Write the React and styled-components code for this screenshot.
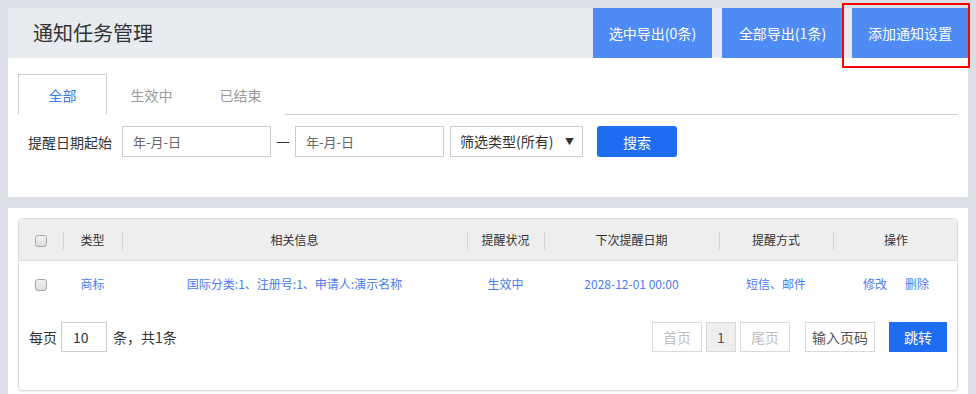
import React from "react";
import styled, { createGlobalStyle } from "styled-components";

const Global = createGlobalStyle`
  html, body { margin: 0; padding: 0; }
  body {
    background: #dcdfe5;
    font-family: "Microsoft YaHei", "Noto Sans CJK SC", "Noto Sans", sans-serif;
    color: #333;
  }
  * { box-sizing: border-box; }
`;

const Page = styled.div`
  padding: 8px 8px 0 8px;
  display: flex;
  flex-direction: column;
  gap: 11px;
  width: 976px;
  height: 394px;
  overflow: hidden;
`;

const Panel = styled.section`
  background: #fff;
`;

const Header = styled.header`
  height: 50px;
  background: #e8ebef;
  display: flex;
  align-items: stretch;
`;

const Title = styled.h1`
  margin: 0;
  padding-left: 25px;
  font-size: 20px;
  font-weight: normal;
  line-height: 50px;
  color: #333;
  flex: 1;
`;

const HeadButtons = styled.div`
  display: flex;
  gap: 10px;
`;

const HeadButton = styled.button`
  position: relative;
  width: ${(p) => p.$w}px;
  height: 50px;
  border: 0;
  background: #4e8bf4;
  color: #fff;
  font-family: inherit;
  font-size: 14px;
  padding: 0;
  cursor: pointer;
`;

const Highlight = styled.span`
  position: absolute;
  left: -10px;
  top: -5px;
  right: -2px;
  bottom: -10px;
  border: 2px solid #f00;
  pointer-events: none;
`;

const PanelBody = styled.div`
  padding: 16px 10px 40px 10px;
`;

const Tabs = styled.div`
  display: flex;
  height: 41px;
  border-bottom: 1px solid #cfcfcf;
`;

const Tab = styled.div`
  width: 89px;
  height: 41px;
  line-height: 40px;
  text-align: center;
  font-size: 14px;
  color: ${(p) => (p.$active ? "#3a78ee" : "#999")};
  background: #fff;
  border: 1px solid ${(p) => (p.$active ? "#cfcfcf" : "transparent")};
  border-bottom: ${(p) => (p.$active ? "1px solid #fff" : "0")};
`;

const FilterRow = styled.div`
  display: flex;
  align-items: center;
  margin-top: 11px;
  height: 31px;
`;

const Label = styled.span`
  font-size: 14px;
  color: #333;
  padding-left: 10px;
  width: 104px;
`;

const DateInput = styled.div`
  width: 149px;
  height: 31px;
  border: 1px solid #ccc;
  font-size: 13px;
  color: #666;
  line-height: 29px;
  padding-left: 10px;
`;

const Dash = styled.span`
  width: 24px;
  text-align: center;
  font-family: "DejaVu Sans", sans-serif;
  font-size: 14px;
  line-height: 31px;
  color: #333;
`;

const Select = styled.div`
  margin-left: 6px;
  width: 133px;
  height: 31px;
  border: 1px solid #ccc;
  font-size: 14px;
  color: #333;
  line-height: 29px;
  padding: 0 8px 0 9px;
  display: flex;
  justify-content: space-between;
`;

const Arrow = styled.span`
  font-size: 9px;
  color: #333;
`;

const SearchButton = styled.button`
  margin-left: 14px;
  width: 80px;
  height: 31px;
  border: 0;
  border-radius: 3px;
  background: #1d6cf2;
  color: #fff;
  font-family: inherit;
  font-size: 14px;
  padding: 0;
`;

const TablePanelBody = styled.div`
  padding: 10px 10px 0 10px;
  height: 186px;
`;

const Card = styled.div`
  border: 1px solid #ddd;
  border-radius: 4px;
  box-shadow: 0 1px 2px rgba(0, 0, 0, 0.08);
  height: 173px;
  overflow: hidden;
`;

const Table = styled.table`
  width: 100%;
  border-collapse: collapse;
  table-layout: fixed;
  font-size: 12px;
`;

const Th = styled.th`
  position: relative;
  height: 41px;
  background: #eeeeee;
  border-bottom: 1px solid #dcdcdc;
  font-weight: normal;
  color: #333;
  text-align: center;
  padding: 0;
  &::before {
    content: "";
    display: ${(p) => (p.$first ? "none" : "block")};
    position: absolute;
    left: 0;
    top: 13px;
    height: 18px;
    border-left: 1px solid #d4d4d4;
  }
`;

const Td = styled.td`
  height: 46px;
  text-align: center;
  padding: 0;
  color: #4a7cf0;
`;

const Check = styled.span`
  display: inline-block;
  width: 12px;
  height: 12px;
  border: 1px solid #a8a8a8;
  border-radius: 3px;
  background: linear-gradient(#f2f2f2, #dcdcdc);
  vertical-align: middle;
`;

const Ops = styled.span`
  display: inline-flex;
  gap: 18px;
`;

const Pager = styled.div`
  display: flex;
  align-items: center;
  margin-top: 16px;
  padding: 0 10px;
  font-size: 14px;
`;

const PerPageInput = styled.div`
  width: 46px;
  height: 30px;
  border: 1px solid #c9ced6;
  line-height: 28px;
  padding-left: 11px;
  margin: 0 6px 0 4px;
  color: #333;
`;

const Spacer = styled.div`
  flex: 1;
`;

const PageBtn = styled.div`
  width: ${(p) => p.$w}px;
  height: 30px;
  margin-left: ${(p) => p.$ml || 0}px;
  border: 1px solid #d9d9d9;
  background: ${(p) => (p.$current ? "#eeeeee" : "#fff")};
  color: ${(p) => (p.$current ? "#555" : p.$dark ? "#555" : "#c0c0c0")};
  text-align: center;
  line-height: 28px;
  font-size: 14px;
`;

const JumpButton = styled.button`
  margin-left: 14px;
  width: 58px;
  height: 30px;
  border: 0;
  background: #1d6cf2;
  color: #fff;
  font-family: inherit;
  font-size: 14px;
  padding: 0;
`;

const cols = [44, 59, 345, 77, 175, 114, 126];

export default function App() {
  return (
    <>
      <Global />
      <Page>
        <Panel>
          <Header>
            <Title>通知任务管理</Title>
            <HeadButtons>
              <HeadButton $w={119}>选中导出(0条)</HeadButton>
              <HeadButton $w={121}>全部导出(1条)</HeadButton>
              <HeadButton $w={116} style={{ marginLeft: -1 }}>
                添加通知设置
                <Highlight />
              </HeadButton>
            </HeadButtons>
          </Header>
          <PanelBody>
            <Tabs>
              <Tab $active>全部</Tab>
              <Tab>生效中</Tab>
              <Tab>已结束</Tab>
            </Tabs>
            <FilterRow>
              <Label>提醒日期起始</Label>
              <DateInput>年-月-日</DateInput>
              <Dash>—</Dash>
              <DateInput>年-月-日</DateInput>
              <Select>
                <span>筛选类型(所有)</span>
                <Arrow>▼</Arrow>
              </Select>
              <SearchButton>搜索</SearchButton>
            </FilterRow>
          </PanelBody>
        </Panel>
        <Panel>
          <TablePanelBody>
            <Card>
              <Table>
                <colgroup>
                  {cols.map((w, i) => (
                    <col key={i} style={{ width: w }} />
                  ))}
                </colgroup>
                <thead>
                  <tr>
                    <Th $first>
                      <Check />
                    </Th>
                    <Th>类型</Th>
                    <Th>相关信息</Th>
                    <Th>提醒状况</Th>
                    <Th>下次提醒日期</Th>
                    <Th>提醒方式</Th>
                    <Th>操作</Th>
                  </tr>
                </thead>
                <tbody>
                  <tr>
                    <Td>
                      <Check />
                    </Td>
                    <Td>商标</Td>
                    <Td>国际分类:1、注册号:1、申请人:演示名称</Td>
                    <Td>生效中</Td>
                    <Td>2028-12-01 00:00</Td>
                    <Td>短信、邮件</Td>
                    <Td>
                      <Ops>
                        <span>修改</span>
                        <span>删除</span>
                      </Ops>
                    </Td>
                  </tr>
                </tbody>
              </Table>
              <Pager>
                <span>每页</span>
                <PerPageInput>10</PerPageInput>
                <span>条，共1条</span>
                <Spacer />
                <PageBtn $w={50}>首页</PageBtn>
                <PageBtn $w={30} $ml={4} $current>
                  1
                </PageBtn>
                <PageBtn $w={50} $ml={4}>
                  尾页
                </PageBtn>
                <PageBtn $w={70} $ml={15} $dark>
                  输入页码
                </PageBtn>
                <JumpButton>跳转</JumpButton>
              </Pager>
            </Card>
          </TablePanelBody>
        </Panel>
      </Page>
    </>
  );
}
